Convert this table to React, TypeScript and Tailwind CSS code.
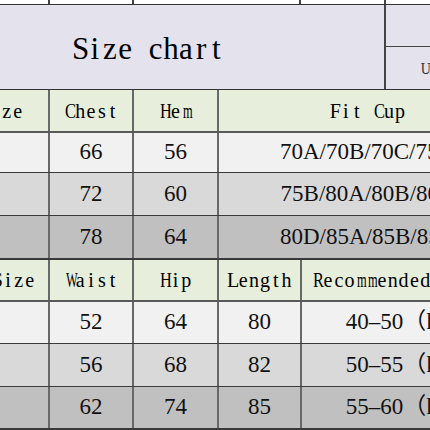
import React from 'react';

const SERIF = "font-['Liberation_Serif','Noto_Sans_CJK_SC',serif]";

const UPPER = 'grid grid-cols-[48px_82px_83px_297px] gap-x-[2px] bg-[#686868]';
const LOWER = 'grid grid-cols-[48px_82px_83px_81px_214px] gap-x-[2px] bg-[#686868]';

const FIT_ROWS = [
  { bg: 'bg-[#f1f1f1]', h: 'h-[39px]', chest: '66', hem: '56', cup: '70A/70B/70C/75A' },
  { bg: 'bg-[#d9d9d9]', h: 'h-[42px]', chest: '72', hem: '60', cup: '75B/80A/80B/80C' },
  { bg: 'bg-[#c0c0c0]', h: 'h-[42px]', chest: '78', hem: '64', cup: '80D/85A/85B/85C' },
];

const BODY_ROWS = [
  { bg: 'bg-[#f1f1f1]', h: 'h-[41px]', waist: '52', hip: '64', length: '80', weight: '40–50（kg）' },
  { bg: 'bg-[#d9d9d9]', h: 'h-[42px]', waist: '56', hip: '68', length: '82', weight: '50–55（kg）' },
  { bg: 'bg-[#c0c0c0]', h: 'h-[41px]', waist: '62', hip: '74', length: '85', weight: '55–60（kg）' },
];

// squeeze wide serif letters so they sit in a fixed pitch, like SimSun's Latin
const squeeze = (ch: string) => {
  if ('mMWw'.includes(ch)) return 'scale-x-[0.62]';
  if ('CHDUABRNGOKXVY'.includes(ch)) return 'scale-x-[0.82]';
  return '';
};

const Mono = ({ text, cell }: { text: string; cell: string }) => (
  <span className="inline-flex">
    {text.split('').map((ch, i) => (
      <span key={i} className={`inline-block text-center ${cell} ${squeeze(ch)}`}>
        {ch === ' ' ? '\u00a0' : ch}
      </span>
    ))}
  </span>
);

const Head = ({ text, className = '' }: { text: string; className?: string }) => (
  <div
    className={`flex items-center justify-center whitespace-nowrap bg-[#e7eedb] text-[20px] text-black ${SERIF} ${className}`}
  >
    <Mono text={text} cell="w-[10.8px]" />
  </div>
);

const Cell = ({ children, bg }: { children?: React.ReactNode; bg: string }) => (
  <div className={`flex items-center justify-center whitespace-nowrap text-[23px] text-[#111] ${SERIF} ${bg}`}>
    {children}
  </div>
);

export default function App() {
  return (
    <div className="w-[430px] h-[430px] overflow-hidden bg-white">
      <div className="w-[516px] flex flex-col">
        {/* top strip from the table above */}
        <div className="grid grid-cols-[48px_82px_165px_83px_130px] gap-x-[2px] bg-[#444] h-[4px] border-b border-[#333] box-content">
          <div className="bg-white" />
          <div className="bg-white" />
          <div className="bg-white" />
          <div className="bg-white" />
          <div className="bg-white" />
        </div>

        {/* title */}
        <div className="grid grid-cols-[384px_130px] gap-x-[2px] bg-[#444] h-[84px] border-b border-[#333] box-content">
          <div className={`flex items-center pl-[72px] pt-[4px] bg-[#e4e2ec] text-[31px] text-black ${SERIF}`}>
            <Mono text="Size chart" cell="w-[15.2px]" />
          </div>
          <div className="flex flex-col bg-[#e4e2ec]">
            <div className="h-[42px] border-b border-[#444]" />
            <div className={`flex-1 flex items-center pl-[34px] pt-[2px] text-[17px] text-[#333] ${SERIF}`}>
              <Mono text="Unit:cm" cell="w-[9px]" />
            </div>
          </div>
        </div>

        {/* fit table */}
        <div className={`${UPPER} h-[41px] border-b-2 border-[#5a5a5a] box-content`}>
          <Head text="Size" className="!justify-end pr-[25px]" />
          <Head text="Chest" />
          <Head text="Hem" />
          <Head text="Fit Cup" />
        </div>
        {FIT_ROWS.map((r, i) => (
          <div
            key={r.chest}
            className={`${UPPER} ${r.h} box-content ${i === 2 ? 'border-b-2 border-[#3a3a3a]' : 'border-b border-[#3a3a3a]'}`}
          >
            <Cell bg={r.bg} />
            <Cell bg={r.bg}>{r.chest}</Cell>
            <Cell bg={r.bg}>{r.hem}</Cell>
            <Cell bg={r.bg}>{r.cup}</Cell>
          </div>
        ))}

        {/* body table */}
        <div className={`${LOWER} h-[40px] border-b-2 border-[#5a5a5a] box-content`}>
          <Head text="Size" className="!justify-end pr-[13px]" />
          <Head text="Waist" />
          <Head text="Hip" />
          <Head text="Length" />
          <Head text="Recommended Weight" />
        </div>
        {BODY_ROWS.map((r, i) => (
          <div
            key={r.waist}
            className={`${LOWER} ${r.h} box-content ${i === 2 ? 'border-b-2 border-[#3a3a3a]' : 'border-b border-[#3a3a3a]'}`}
          >
            <Cell bg={r.bg} />
            <Cell bg={r.bg}>{r.waist}</Cell>
            <Cell bg={r.bg}>{r.hip}</Cell>
            <Cell bg={r.bg}>{r.length}</Cell>
            <Cell bg={r.bg}>{r.weight}</Cell>
          </div>
        ))}
      </div>
    </div>
  );
}
